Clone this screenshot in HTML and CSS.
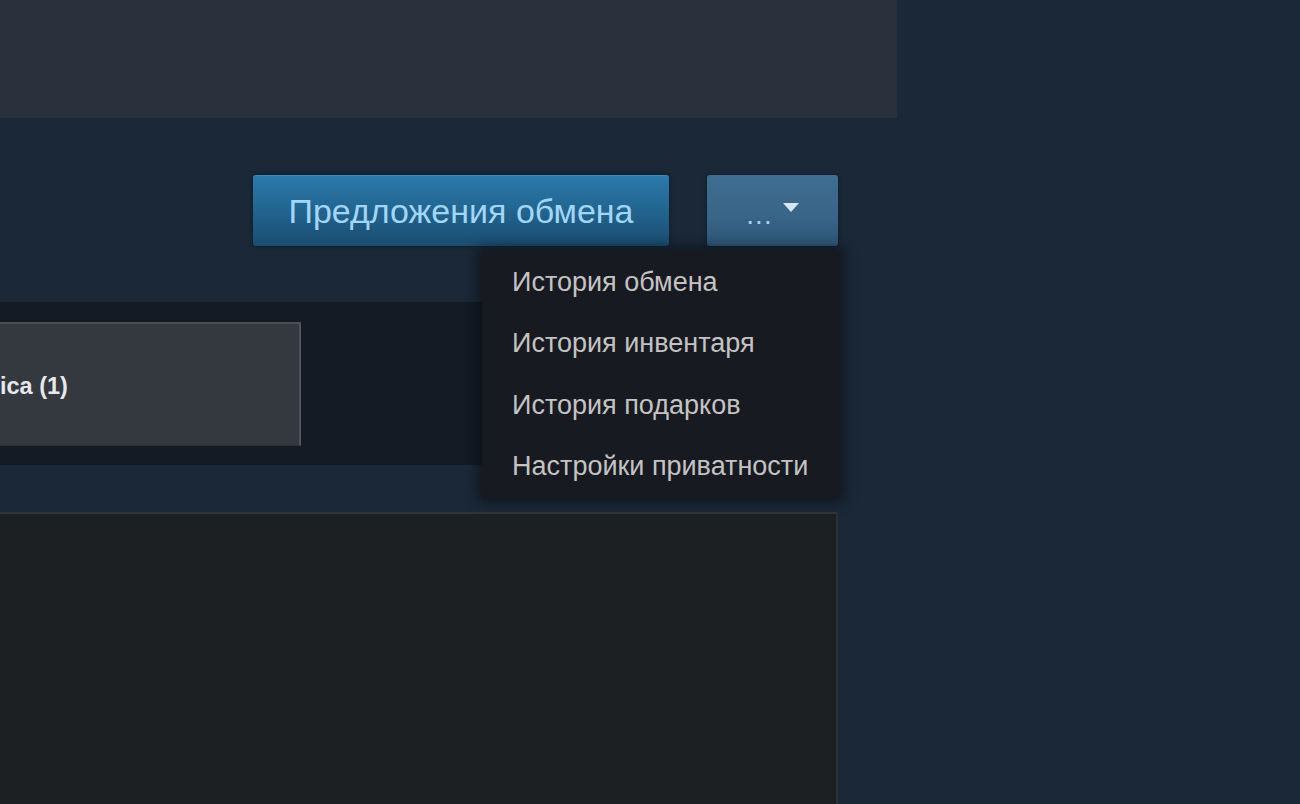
FILE: index.html
```html
<!DOCTYPE html>
<html lang="ru">
<head>
<meta charset="utf-8">
<link rel="stylesheet" href="styles.css">
</head>
<body>
<div class="page">
  <div class="top-panel"></div>
  <div class="main">
    <div class="actions">
      <button class="btn btn-primary">Предложения обмена</button>
      <div class="more-wrap">
        <button class="btn btn-more"><span class="dots">...</span><span class="caret"></span></button>
        <div class="dropdown">
          <a class="dd-item">История обмена</a>
          <a class="dd-item">История инвентаря</a>
          <a class="dd-item">История подарков</a>
          <a class="dd-item">Настройки приватности</a>
        </div>
      </div>
    </div>
    <div class="band">
      <div class="tab"><span class="tab-label">ica (1)</span></div>
    </div>
    <div class="content-box"></div>
  </div>
</div>
</body>
</html>
```

FILE: styles.css
```css
html, body {
  margin: 0;
  padding: 0;
}
body {
  background: #1b2838;
  font-family: "Liberation Sans", Arial, sans-serif;
  width: 1300px;
  height: 804px;
  overflow: hidden;
}
.page {
  display: flex;
  flex-direction: column;
}
.top-panel {
  width: 897px;
  height: 118px;
  background: #2a313d;
}
.main {
  width: 838px;
  display: flex;
  flex-direction: column;
}
.actions {
  height: 184px;
  display: flex;
  justify-content: flex-end;
  align-items: flex-start;
  padding-top: 57px;
  box-sizing: border-box;
  gap: 38px;
}
.btn {
  border: none;
  border-radius: 3px;
  height: 71px;
  font-family: "Liberation Sans", Arial, sans-serif;
  cursor: pointer;
  padding: 0;
}
.btn-primary {
  width: 416px;
  background: linear-gradient(to bottom, #2a7aab 0%, #22648f 50%, #1a4c70 100%);
  color: #a2d6f6;
  font-size: 34px;
  box-shadow: 0 0 4px rgba(0,0,0,0.4);
  border-top: 1px solid #3b8dc0;
}
.more-wrap {
  position: relative;
}
.btn-more {
  width: 131px;
  background: linear-gradient(to bottom, #3f6e92 0%, #386487 60%, #2f5677 100%);
  color: #9fd3f3;
  font-size: 28px;
  display: flex;
  align-items: center;
  justify-content: center;
  gap: 10px;
  box-shadow: 0 0 4px rgba(0,0,0,0.4);
}
.dots {
  position: relative;
  top: 4px;
  letter-spacing: 1px;
}
.caret {
  width: 0;
  height: 0;
  border-left: 8px solid transparent;
  border-right: 8px solid transparent;
  border-top: 9px solid #d8e6ef;
  position: relative;
  top: -3px;
}
.dropdown {
  position: absolute;
  top: 76px;
  right: -2px;
  width: 358px;
  height: 247px;
  background: #171a21;
  box-shadow: 0 0 12px 4px rgba(0,0,0,0.45);
  display: flex;
  flex-direction: column;
  padding-top: 1px;
  box-sizing: border-box;
  z-index: 10;
}
.dd-item {
  display: block;
  flex: none;
  line-height: 61.3px;
  padding-left: 30px;
  font-size: 27px;
  color: #c4c3c2;
  white-space: nowrap;
}
.band {
  height: 163px;
  background: #141b25;
  padding-top: 20px;
  box-sizing: border-box;
}
.tab {
  width: 301px;
  height: 124px;
  background: #34383f;
  border-top: 2px solid #4a5058;
  border-right: 2px solid #4f555d;
  border-bottom: 1px solid #2c3036;
  box-sizing: border-box;
  display: flex;
  align-items: center;
}
.tab-label {
  color: #e6e8ea;
  font-weight: bold;
  font-size: 23.5px;
  position: relative;
  top: 2px;
}
.band + .content-box {
  margin-top: 47px;
}
.content-box {
  height: 292px;
  background: #1d2022;
  border-top: 2px solid #30353c;
  border-right: 2px solid #2a3036;
  box-sizing: border-box;
}
```
